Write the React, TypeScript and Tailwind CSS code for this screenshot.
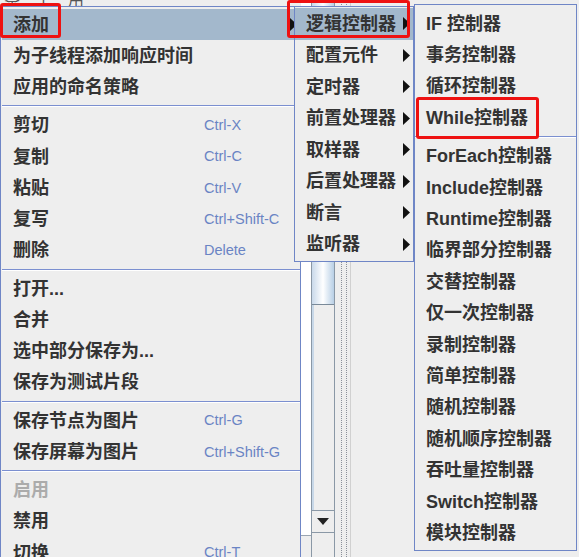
import clsx from "clsx";

type Entry =
  | { sep: true }
  | { label: string; shortcut?: string; arrow?: boolean; active?: boolean; disabled?: boolean };

const mainMenu: Entry[] = [
  { label: "添加", arrow: true, active: true },
  { label: "为子线程添加响应时间" },
  { label: "应用的命名策略" },
  { sep: true },
  { label: "剪切", shortcut: "Ctrl-X" },
  { label: "复制", shortcut: "Ctrl-C" },
  { label: "粘贴", shortcut: "Ctrl-V" },
  { label: "复写", shortcut: "Ctrl+Shift-C" },
  { label: "删除", shortcut: "Delete" },
  { sep: true },
  { label: "打开..." },
  { label: "合并" },
  { label: "选中部分保存为..." },
  { label: "保存为测试片段" },
  { sep: true },
  { label: "保存节点为图片", shortcut: "Ctrl-G" },
  { label: "保存屏幕为图片", shortcut: "Ctrl+Shift-G" },
  { sep: true },
  { label: "启用", disabled: true },
  { label: "禁用" },
  { label: "切换", shortcut: "Ctrl-T" },
];

const addMenu: Entry[] = [
  { label: "逻辑控制器", arrow: true, active: true },
  { label: "配置元件", arrow: true },
  { label: "定时器", arrow: true },
  { label: "前置处理器", arrow: true },
  { label: "取样器", arrow: true },
  { label: "后置处理器", arrow: true },
  { label: "断言", arrow: true },
  { label: "监听器", arrow: true },
];

const controllers: Entry[] = [
  { label: "IF 控制器" },
  { label: "事务控制器" },
  { label: "循环控制器" },
  { label: "While控制器" },
  { sep: true },
  { label: "ForEach控制器" },
  { label: "Include控制器" },
  { label: "Runtime控制器" },
  { label: "临界部分控制器" },
  { label: "交替控制器" },
  { label: "仅一次控制器" },
  { label: "录制控制器" },
  { label: "简单控制器" },
  { label: "随机控制器" },
  { label: "随机顺序控制器" },
  { label: "吞吐量控制器" },
  { label: "Switch控制器" },
  { label: "模块控制器" },
];

function Arrow() {
  return (
    <svg width="7" height="13" viewBox="0 0 7 13" className="shrink-0">
      <polygon points="0,0 7,6.5 0,13" fill="#111" />
    </svg>
  );
}

function Menu({
  items,
  row,
  labelWidth,
  className,
}: {
  items: Entry[];
  row: string;
  labelWidth?: string;
  className: string;
}) {
  return (
    <div className={clsx("absolute border border-[#6f86c6] bg-[#eeeeee] pb-px", className)}>
      {items.map((it, i) =>
        "sep" in it ? (
          <div key={i} className="flex h-[7px] flex-col justify-center">
            <div className="h-px bg-[#7b8fd0]" />
            <div className="h-px bg-white" />
          </div>
        ) : (
          <div key={i} className={clsx("flex items-center pl-[11px] pr-[3px]", row, it.active && "bg-[#a3b8cc]")}>
            <span
              className={clsx(
                "whitespace-nowrap text-[18px] font-bold leading-none",
                labelWidth,
                it.disabled ? "text-[#ababab]" : "text-[#333333]"
              )}
            >
              {it.label}
            </span>
            {it.shortcut && (
              <span className="whitespace-nowrap text-[14.5px] leading-none text-[#6a84c4]">{it.shortcut}</span>
            )}
            {it.arrow && (
              <span className="ml-auto flex">
                <Arrow />
              </span>
            )}
          </div>
        )
      )}
    </div>
  );
}

function Backdrop() {
  return (
    <div className="flex h-full w-full bg-[#eeeeee]">
      <div className="flex w-[301px] flex-col">
        <div className="h-[6px] overflow-hidden">
          <div className="-mt-[12px] flex gap-4 pl-1 text-[16px] text-[#555]">
            <span>察</span>
            <span>上</span>
            <span>用</span>
          </div>
        </div>
      </div>
      <div className="flex w-[10px] flex-col">
        <div className="flex-1 bg-white" />
        <div className="h-[22px] border-t border-[#9aa5b1] bg-[#eeeeee]" />
      </div>
      <div className="flex w-[24px] flex-col border-x border-[#8a98a6]">
        <div className="h-[305px] border-b border-[#7a8a99] bg-gradient-to-r from-[#c9d9ea] via-white to-[#b8cfe5]" />
        <div className="flex-1 border-l-2 border-[#c8d8e8] bg-[#eeeeee]" />
        <div className="flex h-[23px] items-center justify-center border-y border-[#8a98a6] bg-[#eeeeee]">
          <svg width="12" height="7" viewBox="0 0 12 7">
            <polygon points="0,0 12,0 6,7" fill="#222" />
          </svg>
        </div>
        <div className="h-[24px] bg-[#eeeeee]" />
      </div>
      <div className="w-[6px]" />
      <div className="w-[6px] border-x border-dotted border-[#8a8f99]" />
      <div className="w-[3px]" />
      <div className="flex-1 border-l border-[#d0d0d0]" />
    </div>
  );
}

export default function App() {
  return (
    <div className="relative h-[557px] w-[579px] overflow-hidden bg-[#eeeeee] font-[Liberation_Sans,Noto_Sans_CJK_SC,sans-serif]">
      <Backdrop />

      <Menu items={mainMenu} row="h-[31.25px]" labelWidth="w-[191px]" className="left-0 top-[6px] w-[301px] pl-px pt-[2px]" />
      <Menu items={addMenu} row="h-[31.5px]" className="left-[294px] top-[6px] w-[120px] pt-px" />
      <Menu items={controllers} row="h-[31.4px]" className="left-[414px] top-[4px] w-[163px] pt-[3px]" />

      {/* red callouts */}
      <div className="absolute left-0 top-[3px] h-[35px] w-[61px] rounded-[3px] border-[3px] border-[#ee1111]" />
      <div className="absolute left-[287px] top-0 h-[38px] w-[123px] rounded-[3px] border-[3px] border-[#ee1111]" />
      <div className="absolute left-[416px] top-[97px] h-[42px] w-[123px] rounded-[3px] border-[3px] border-[#ee1111]" />
    </div>
  );
}
